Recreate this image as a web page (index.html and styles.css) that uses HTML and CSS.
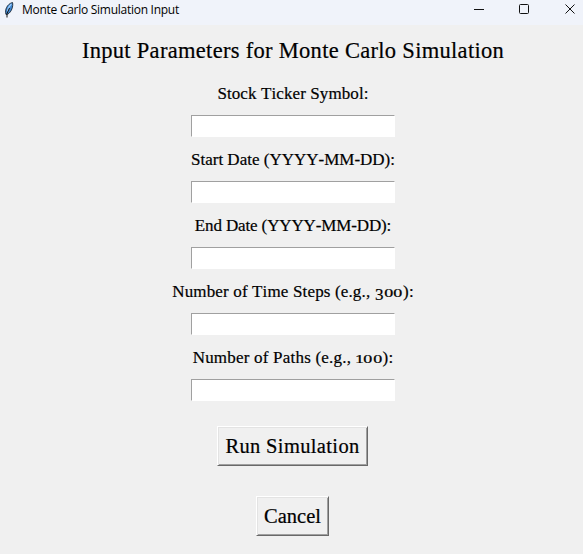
FILE: index.html
```html
<!DOCTYPE html>
<html lang="en">
<head>
<meta charset="utf-8">
<title>Monte Carlo Simulation Input</title>
<link rel="stylesheet" href="styles.css">
</head>
<body>
<header class="titlebar">
  <svg class="feather" width="12" height="18" viewBox="0 0 12 18">
    <path d="M3 13.500C1.500 9 4 3 9.500 1.500C10.500 5 8.500 11 5 13Z" fill="#3f86d0" stroke="#1c2733" stroke-width=".9"/>
    <path d="M4.500 10.500C5 7 6.500 4.500 8.500 3" fill="none" stroke="#9fd0ff" stroke-width="1.200"/>
    <path d="M4 16.500L4 12.500L6.500 7" fill="none" stroke="#111" stroke-width="1"/>
  </svg>
  <span class="caption">Monte Carlo Simulation Input</span>
  <svg class="controls" width="103" height="18" viewBox="0 0 103 18" fill="none" stroke="#111">
    <path d="M0 9.500H10"/>
    <rect x="45.500" y="4.500" width="9" height="9" rx="1"/>
    <path d="M91.500 4.500L100.500 13.500M100.500 4.500L91.500 13.500"/>
  </svg>
</header>
<main class="form">
  <h1 class="heading">Input Parameters for Monte Carlo Simulation</h1>
  <label class="label ticker" for="ticker">Stock Ticker Symbol:</label>
  <input class="entry" id="ticker">
  <label class="label start" for="start">Start Date (YYYY-MM-DD):</label>
  <input class="entry" id="start">
  <label class="label end" for="end">End Date (YYYY-MM-DD):</label>
  <input class="entry" id="end">
  <label class="label steps" for="steps">Number of Time Steps (e.g., <span class="three">3</span><span class="zero">0</span><span class="zero">0</span>):</label>
  <input class="entry" id="steps">
  <label class="label paths" for="paths">Number of Paths (e.g., <span class="one">1</span><span class="zero">0</span><span class="zero">0</span>):</label>
  <input class="entry" id="paths">
  <button class="button run">Run Simulation</button>
  <button class="button cancel">Cancel</button>
</main>
</body>
</html>
```
FILE: styles.css
```css
* { box-sizing: border-box; }
body {
  margin: 0;
  height: 554px;
  overflow: hidden;
  background: #f0f0f0;
  color: #000;
  font-family: Georgia, "Liberation Serif", serif;
  font-kerning: none;
}
.titlebar {
  display: flex;
  height: 25px;
  padding: 0 6px 0 3px;
  background: #f0f3fa;
}
.feather { flex: none; margin: 1px 7px 0 0; }
.caption {
  flex: 1;
  font: 12px/20px "Open Sans", sans-serif;
  letter-spacing: -0.27px;
  white-space: nowrap;
}
.controls { flex: none; }
.form {
  display: flex;
  flex-direction: column;
  align-items: center;
  padding: 12px 0 0 3px;
  -webkit-text-stroke: 0.2px #000;
}
.heading {
  margin: 0 0 15px;
  font-size: 22.5px;
  font-weight: 400;
  line-height: 28px;
  letter-spacing: 0.3px;
  white-space: nowrap;
}
.label {
  height: 26px;
  margin-bottom: 9px;
  font-size: 17px;
  line-height: 27px;
  white-space: nowrap;
}
.ticker { letter-spacing: 0.1px; }
.end { letter-spacing: -0.13px; }
.steps { letter-spacing: 0.15px; }
.paths { letter-spacing: 0.21px; }
/* Old-style numerals */
.zero, .one, .three { display: inline-block; text-align: center; line-height: 1; }
.zero { width: 9.7px; font-size: 12px; transform: scaleX(1.5); }
.one { width: 7.5px; font-size: 12px; transform: scaleX(1.5); }
.three { width: 9px; transform: translateY(3px); }
.entry {
  width: 204px;
  height: 22px;
  margin: 0 0 9px;
  padding: 0 2px;
  border: solid;
  border-width: 1px;
  border-color: #a0a0a0 #fff #fff #a0a0a0;
  border-radius: 0;
  background: #fff;
  outline: 0;
}
.button {
  height: 40px;
  padding: 0;
  border: 1px solid;
  border-color: #fff #696969 #696969 #fff;
  border-radius: 0;
  background: #f0f0f0;
  box-shadow: inset 1px 1px #e3e3e3, inset -1px -1px #a0a0a0;
  color: #000;
  font-family: inherit;
  font-size: 20.5px;
  line-height: 38px;
  -webkit-text-stroke: 0.2px #000;
}
.run { width: 151px; margin: 16px 1px 30px 0; letter-spacing: 0.35px; }
.cancel { width: 73px; margin-right: 1px; letter-spacing: 0; }
```
